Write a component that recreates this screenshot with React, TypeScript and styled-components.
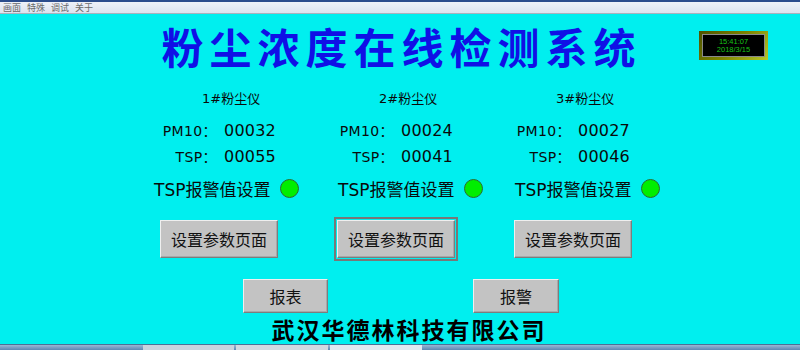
import React from "react";
import styled, { createGlobalStyle } from "styled-components";

interface Device {
  name: string;
  pm10: string;
  tsp: string;
  alarmInset: number;
  focused?: boolean;
}

const devices: Device[] = [
  { name: "1#粉尘仪", pm10: "00032", tsp: "00055", alarmInset: 16 },
  { name: "2#粉尘仪", pm10: "00024", tsp: "00041", alarmInset: 23, focused: true },
  { name: "3#粉尘仪", pm10: "00027", tsp: "00046", alarmInset: 23 },
];

const GlobalStyle = createGlobalStyle`
  html, body {
    margin: 0;
    padding: 0;
    background: #00efef;
  }
  #root {
    width: 800px;
    height: 350px;
    overflow: hidden;
  }
`;

const Screen = styled.div`
  width: 800px;
  height: 350px;
  display: flex;
  flex-direction: column;
  background: #00efef;
  font-family: "DejaVu Sans", "Noto Sans CJK SC", sans-serif;
  color: #0a0a0a;
`;

const MenuBar = styled.div`
  height: 13px;
  display: flex;
  align-items: center;
  gap: 6px;
  padding-left: 3px;
  background: linear-gradient(to bottom, #2b4c8c 0px, #2b4c8c 2px, #eef1f8 2px, #dde3ef 100%);
  border-bottom: 1px solid #a9b1bd;
  font-family: "Noto Sans CJK SC", sans-serif;
  font-size: 9px;
  line-height: 13px;
  color: #6a6a6a;
`;

const MenuItem = styled.span`
  padding: 2px 0 0 0;
  width: 18px;
`;

const Main = styled.div`
  flex: 1;
  display: flex;
  flex-direction: column;
`;

const Header = styled.div`
  box-sizing: border-box;
  height: 66px;
  padding-top: 11px;
  display: grid;
  grid-template-columns: 1fr auto 1fr;
`;

const Title = styled.h1`
  grid-column: 2;
  margin: 0 0 0 3px;
  font-family: "Noto Sans CJK SC", serif;
  font-size: 42px;
  line-height: 42px;
  font-weight: 700;
  letter-spacing: 6px;
  color: #1010e6;
`;

const Clock = styled.div`
  grid-column: 3;
  justify-self: end;
  align-self: start;
  margin: 6px 32px 0 0;
  box-sizing: border-box;
  width: 69px;
  height: 29px;
  padding: 3px;
  background: linear-gradient(135deg, #4e5200 0%, #7c8400 50%, #b8c82a 100%);
`;

const ClockFace = styled.div`
  box-sizing: border-box;
  height: 100%;
  border: 1px solid #8a8a8a;
  background: #000;
  display: flex;
  flex-direction: column;
  align-items: center;
  justify-content: center;
  font-family: "Liberation Sans", sans-serif;
  font-size: 7.5px;
  line-height: 8px;
  color: #16c416;
`;

const Panel = styled.div`
  display: grid;
  grid-template-columns: repeat(3, 177px);
  margin-left: 138px;
`;

const Column = styled.div`
  display: flex;
  flex-direction: column;
  align-items: flex-start;
`;

const DeviceName = styled.div`
  margin: 11px 0 0 64px;
  font-size: 13px;
  line-height: 16px;
`;

const Reading = styled.div<{ $top: number }>`
  display: flex;
  align-items: center;
  height: 18px;
  margin-top: ${(p) => p.$top}px;
  margin-left: 1px;
`;

const ReadingLabel = styled.span`
  width: 78px;
  text-align: right;
  font-size: 14px;
  letter-spacing: 0.4px;
`;

const ReadingValue = styled.span`
  margin-left: 7px;
  font-size: 16px;
  letter-spacing: 0.2px;
`;

const AlarmRow = styled.div<{ $inset: number }>`
  display: flex;
  align-items: center;
  height: 22px;
  margin: 12px 0 0 ${(p) => p.$inset}px;
  font-size: 17px;
`;

const Led = styled.span`
  box-sizing: border-box;
  width: 19px;
  height: 19px;
  margin-left: 10px;
  border-radius: 50%;
  background: #00ee00;
  border: 1px solid #2d6b2d;
`;

const WinButton = styled.button<{ $width: number; $height: number; $focused?: boolean }>`
  box-sizing: border-box;
  width: ${(p) => p.$width}px;
  height: ${(p) => p.$height}px;
  padding: 0;
  background: #c3c3c3;
  border: 1px solid;
  border-color: #efefef #7d7d7d #7d7d7d #efefef;
  box-shadow: inset -1px -1px 0 #a8a8a8;
  font-family: "Noto Sans CJK SC", sans-serif;
  font-size: 16px;
  color: #111;
  outline: ${(p) => (p.$focused ? "2px solid #787878" : "none")};
  outline-offset: 1px;
`;

const SetupSlot = styled.div`
  margin: 21px 0 0 22px;
`;

const ActionRow = styled.div`
  display: flex;
  gap: 145px;
  margin: 21px 0 0 243px;
`;

const Footer = styled.div`
  margin: 3px 0 0 18px;
  text-align: center;
  font-family: "Noto Sans CJK SC", sans-serif;
  font-weight: 700;
  font-size: 23px;
  line-height: 26px;
  letter-spacing: 2px;
  color: #000;
`;

const Taskbar = styled.div`
  height: 5px;
  display: flex;
  background: linear-gradient(to bottom, #9ab7d4, #5f87b3);
  border-top: 1px solid #4e6f96;
`;

const TaskItem = styled.div<{ $width: number; $tone: string }>`
  width: ${(p) => p.$width}px;
  margin-right: 2px;
  background: ${(p) => p.$tone};
`;

const Spacer = styled.div<{ $width: number }>`
  width: ${(p) => p.$width}px;
`;

export default function App() {
  return (
    <>
      <GlobalStyle />
      <Screen>
        <MenuBar>
          <MenuItem>画面</MenuItem>
          <MenuItem>特殊</MenuItem>
          <MenuItem>调试</MenuItem>
          <MenuItem>关于</MenuItem>
        </MenuBar>
        <Main>
          <Header>
            <Title>粉尘浓度在线检测系统</Title>
            <Clock>
              <ClockFace>
                <span>15:41:07</span>
                <span>2018/3/15</span>
              </ClockFace>
            </Clock>
          </Header>
          <Panel>
            {devices.map((d) => (
              <Column key={d.name}>
                <DeviceName>{d.name}</DeviceName>
                <Reading $top={14}>
                  <ReadingLabel>PM10：</ReadingLabel>
                  <ReadingValue>{d.pm10}</ReadingValue>
                </Reading>
                <Reading $top={8}>
                  <ReadingLabel>TSP：</ReadingLabel>
                  <ReadingValue>{d.tsp}</ReadingValue>
                </Reading>
                <AlarmRow $inset={d.alarmInset}>
                  TSP报警值设置
                  <Led />
                </AlarmRow>
                <SetupSlot>
                  <WinButton $width={118} $height={38} $focused={d.focused}>
                    设置参数页面
                  </WinButton>
                </SetupSlot>
              </Column>
            ))}
          </Panel>
          <ActionRow>
            <WinButton $width={85} $height={34}>报表</WinButton>
            <WinButton $width={86} $height={34}>报警</WinButton>
          </ActionRow>
          <Footer>武汉华德林科技有限公司</Footer>
        </Main>
        <Taskbar>
          <Spacer $width={143} />
          <TaskItem $width={91} $tone="#c9d3de" />
          <TaskItem $width={92} $tone="#d2d9e1" />
          <TaskItem $width={92} $tone="#e2e9f1" />
        </Taskbar>
      </Screen>
    </>
  );
}
